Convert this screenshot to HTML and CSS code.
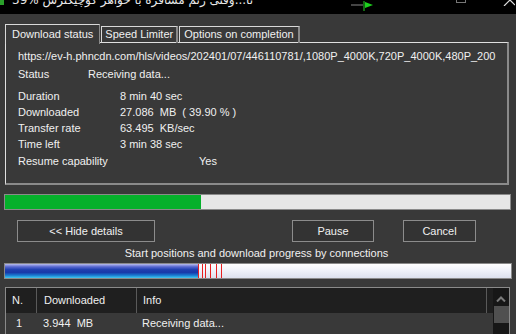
FILE: index.html
```html
<!DOCTYPE html>
<html lang="en">
<head>
    <meta charset="UTF-8">
    <title>Download progress</title>
    <link rel="stylesheet" href="styles.css">
</head>
<body>
    <div class="titlebar">
        <span class="title-icon"></span>
        <span class="title-text">39% تا...وقتی زنم مسافرة با خواهر کوچیکترش</span>
        <span class="title-dash"></span>
        <svg class="title-flag" width="12" height="10" viewBox="0 0 12 10">
            <path d="M1 0 L1 10" stroke="#1a8a1a" stroke-width="1.5"/>
            <path d="M2 1 L10 4 L2 7 Z" fill="#1ed01e"/>
        </svg>
        <span class="win-max"></span>
        <svg class="win-close" width="12" height="6" viewBox="0 0 12 6">
            <path d="M1 6 L7 0 M7 0 L12 5" stroke="#ddd" stroke-width="1.2" fill="none"/>
        </svg>
    </div>

    <div class="tabs">
        <div class="tab active">Download status</div>
        <div class="tab">Speed Limiter</div>
        <div class="tab tab-wide">Options on completion</div>
    </div>

    <div class="panel">
        <div class="url">https://ev-h.phncdn.com/hls/videos/202401/07/446110781/,1080P_4000K,720P_4000K,480P_200</div>
        <div class="status-row">
            <span class="status-label">Status</span>
            <span>Receiving data...</span>
        </div>
        <div class="details">
            <div class="row"><span class="label">Duration</span><span>8 min 40 sec</span></div>
            <div class="row"><span class="label">Downloaded</span><span>27.086&nbsp; MB&nbsp; ( 39.90 % )</span></div>
            <div class="row"><span class="label">Transfer rate</span><span>63.495&nbsp; KB/sec</span></div>
            <div class="row"><span class="label">Time left</span><span>3 min 38 sec</span></div>
            <div class="row resume"><span class="label">Resume capability</span><span class="yes">Yes</span></div>
        </div>
    </div>

    <div class="progress">
        <div class="progress-fill" style="width: 196px"></div>
    </div>

    <div class="buttons">
        <button class="btn btn-hide">&lt;&lt; Hide details</button>
        <button class="btn btn-pause">Pause</button>
        <button class="btn btn-cancel">Cancel</button>
    </div>

    <div class="caption">Start positions and download progress by connections</div>

    <div class="conn-bar">
        <div class="conn-fill" style="width: 193px"></div>
        <span class="mark" style="left: 193px"></span>
        <span class="mark" style="left: 197px"></span>
        <span class="mark" style="left: 200px"></span>
        <span class="mark" style="left: 205px"></span>
        <span class="mark" style="left: 211px"></span>
        <span class="mark" style="left: 216px"></span>
    </div>

    <div class="table">
        <div class="table-main">
            <div class="thead">
                <div class="col col-n">N.</div>
                <div class="col col-dl">Downloaded</div>
                <div class="col col-info">Info</div>
                <div class="col col-end"></div>
            </div>
            <div class="trow">
                <div class="col col-n">1</div>
                <div class="col col-dl">3.944&nbsp; MB</div>
                <div class="col col-info">Receiving data...</div>
            </div>
        </div>
        <div class="scrollbar">
            <svg class="scroll-up" width="10" height="6" viewBox="0 0 10 6">
                <path d="M1 5.5 L5 1.5 L9 5.5" stroke="#7a7a7a" stroke-width="2" fill="none"/>
            </svg>
            <div class="scroll-thumb"></div>
        </div>
    </div>
</body>
</html>
```

FILE: styles.css
```css
body {
    margin: 0;
    background-color: #393939;
    color: #f0f0f0;
    font-family: "Liberation Sans", Arial, sans-serif;
    font-size: 11px;
    overflow: hidden;
}

.titlebar {
    height: 14px;
    background-color: #000;
    display: flex;
    align-items: flex-start;
    overflow: hidden;
}

.title-icon {
    width: 4px;
    height: 5px;
    background-color: #2aa02a;
}

.title-text {
    font-family: "DejaVu Sans", sans-serif;
    font-size: 12px;
    line-height: 14px;
    margin-top: -7px;
    margin-left: 8px;
    color: #e8e8e8;
    white-space: nowrap;
}

.title-dash {
    width: 12px;
    height: 2px;
    margin: 4px 0 0 98px;
    background-color: #444;
}

.title-flag {
    margin-top: 1px;
}

.win-max {
    width: 8px;
    height: 2px;
    margin-left: 81px;
    border: 1px solid #777;
    border-top: none;
}

.win-close {
    margin-left: 37px;
}

.tabs {
    display: flex;
    align-items: flex-start;
    margin-top: 10px;
    padding-left: 5px;
    height: 19px;
    position: relative;
    z-index: 1;
}

.tab {
    height: 16px;
    line-height: 15px;
    margin-top: 2px;
    padding: 0 3px;
    border-top: 1px solid #d8d8d8;
    border-left: 1px solid #d8d8d8;
    border-right: 2px solid #8a8a8a;
    white-space: nowrap;
    margin-right: 1px;
}

.tab.active {
    height: 19px;
    line-height: 18px;
    margin-top: 0;
    padding: 0 6px;
    background-color: #393939;
    border-right: 1px solid #8a8a8a;
}

.tab-wide {
    padding: 0 4px;
}

.panel {
    margin: -1px 7px 0 5px;
    border-top: 1px solid #e0e0e0;
    border-left: 1px solid #e0e0e0;
    border-right: 2px solid #8a8a8a;
    border-bottom: 2px solid #8a8a8a;
    padding: 5px 0 0 12px;
    box-sizing: border-box;
    height: 143px;
}

.url {
    line-height: 16px;
    white-space: nowrap;
    overflow: hidden;
}

.status-row {
    display: flex;
    margin-top: 2px;
    line-height: 16px;
}

.status-label {
    width: 70px;
}

.details {
    margin-top: 6px;
}

.row {
    display: flex;
    line-height: 16px;
}

.row .label {
    width: 102px;
}

.row.resume {
    margin-top: 1px;
}

.yes {
    margin-left: 79px;
}

.progress {
    height: 16px;
    margin: 9px 5px 0 4px;
    border: 1px solid #8a8a8a;
    background-color: #e6e6e6;
    box-sizing: border-box;
}

.progress-fill {
    height: 100%;
    background-color: #05b02b;
}

.buttons {
    display: flex;
    margin-top: 10px;
    height: 22px;
}

.btn {
    height: 22px;
    background-color: #333;
    color: #f0f0f0;
    border: 1px solid #8c8c8c;
    font-family: "Liberation Sans", Arial, sans-serif;
    font-size: 11px;
    padding: 0;
}

.btn-hide {
    width: 138px;
    margin-left: 17px;
}

.btn-pause {
    width: 82px;
    margin-left: 137px;
}

.btn-cancel {
    width: 73px;
    margin-left: 29px;
}

.caption {
    text-align: center;
    line-height: 16px;
    margin-top: 3px;
    padding-right: 3px;
}

.conn-bar {
    position: relative;
    height: 16px;
    margin: 2px 4px 0 4px;
    border: 1px solid #8a8a8a;
    box-sizing: border-box;
    background: linear-gradient(#ffffff, #f2f4fb 40%, #dde1ee);
}

.conn-fill {
    height: 100%;
    background: linear-gradient(#b8bcec 0%, #5868d0 20%, #2040b0 40%, #1838a8 60%, #1878d0 80%, #40c8f0 100%);
}

.mark {
    position: absolute;
    top: 0;
    width: 1px;
    height: 100%;
    background-color: #e82020;
}

.table {
    display: flex;
    margin: 8px 6px 0 5px;
    border: 1px solid #8a8a8a;
    border-bottom: none;
    height: 60px;
}

.table-main {
    flex: 1;
}

.thead {
    display: flex;
    height: 25px;
    line-height: 25px;
    background-color: #1f1f1f;
}

.trow {
    display: flex;
    height: 21px;
    line-height: 21px;
}

.col {
    box-sizing: border-box;
    padding-left: 6px;
    white-space: nowrap;
}

.col-n {
    width: 30px;
}

.trow .col-n {
    padding-left: 10px;
}

.col-dl {
    width: 100px;
    padding-left: 7px;
}

.col-info {
    width: 350px;
    padding-left: 6px;
}

.thead .col-dl,
.thead .col-info {
    border-left: 1px solid #5a5a5a;
}

.col-end {
    flex: 1;
    border-left: 1px solid #5a5a5a;
}

.scrollbar {
    width: 17px;
    background-color: #171717;
    display: flex;
    flex-direction: column;
    align-items: center;
}

.scroll-up {
    margin-top: 8px;
}

.scroll-thumb {
    width: 15px;
    height: 17px;
    margin-top: 4px;
    background-color: #505050;
}
```
